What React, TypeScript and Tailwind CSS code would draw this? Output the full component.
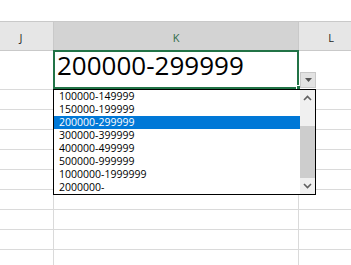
const items = [
  "100000-149999",
  "150000-199999",
  "200000-299999",
  "300000-399999",
  "400000-499999",
  "500000-999999",
  "1000000-1999999",
  "2000000-",
];

const selected = "200000-299999";

function Chevron({ up }: { up?: boolean }) {
  return (
    <svg width="9" height="6" viewBox="0 0 9 6" className="block">
      <path
        d={up ? "M1 5 L4.5 1.5 L8 5" : "M1 1 L4.5 4.5 L8 1"}
        fill="none"
        stroke="#606060"
        strokeWidth="1.6"
      />
    </svg>
  );
}

function GridRow({ height, children }: { height: string; children?: React.ReactNode }) {
  return (
    <div className={`flex border-b border-[#dadada] ${height}`}>
      <div className="w-[54px] shrink-0 border-r border-[#dadada]" />
      <div className="w-[245px] shrink-0 border-r border-[#dadada]">{children}</div>
      <div className="flex-1" />
    </div>
  );
}

export default function App() {
  return (
    <div className="relative w-[351px] h-[265px] overflow-hidden bg-white font-['Open_Sans',sans-serif]">
      <div className="h-[21px]" />

      {/* column headers */}
      <div className="flex h-[30px] border-y border-[#c9c9c9] text-[11px]">
        <div className="w-[54px] shrink-0 flex items-center justify-center pr-[11px] pt-[4px] bg-[#e6e6e6] border-r border-[#c9c9c9] text-[#262626]">
          J
        </div>
        <div className="w-[245px] shrink-0 flex items-center justify-center pt-[4px] bg-[#d3d3d3] border-r border-[#c9c9c9] text-[#2f6b48]">
          K
        </div>
        <div className="flex-1 overflow-hidden bg-[#e6e6e6]">
          <div className="w-[64px] h-full flex items-center justify-center pt-[4px] text-[#262626]">
            L
          </div>
        </div>
      </div>

      {/* cells */}
      <GridRow height="h-[39px]">
        <div className="pl-[3px] pt-[1px] text-[26px] leading-[26px] text-black">{selected}</div>
      </GridRow>
      {Array.from({ length: 9 }).map((_, i) => (
        <GridRow key={i} height="h-[20px]" />
      ))}

      {/* active cell outline */}
      <div className="absolute left-[53px] top-[50px] w-[246px] h-[39px] border-2 border-[#217346]" />
      <div className="absolute left-[296px] top-[85px] w-[5px] h-[5px] bg-[#217346] border border-white" />

      {/* dropdown button */}
      <div className="absolute left-[300px] top-[72px] w-[16px] h-[16px] flex items-center justify-center bg-[#e2e2e2] border border-[#c8c8c8]">
        <svg width="7" height="4" viewBox="0 0 7 4">
          <path d="M0 0 H7 L3.5 4 Z" fill="#555" />
        </svg>
      </div>

      {/* validation list */}
      <div className="absolute left-[53px] top-[89px] w-[263px] h-[106px] flex bg-white border border-black">
        <div className="flex-1 flex flex-col">
          {items.map((item) => (
            <div
              key={item}
              className={`h-[13px] pl-[5px] text-[10.5px] leading-[13px] ${
                item === selected ? "bg-[#0078d7] text-white" : "text-black"
              }`}
            >
              {item}
            </div>
          ))}
        </div>
        <div className="w-[15px] shrink-0 flex flex-col bg-[#f0f0f0]">
          <div className="h-[16px] flex items-center justify-center">
            <Chevron up />
          </div>
          <div className="flex-1 flex flex-col justify-end">
            <div className="h-[52px] bg-[#cdcdcd]" />
          </div>
          <div className="h-[16px] flex items-center justify-center">
            <Chevron />
          </div>
        </div>
      </div>
    </div>
  );
}
